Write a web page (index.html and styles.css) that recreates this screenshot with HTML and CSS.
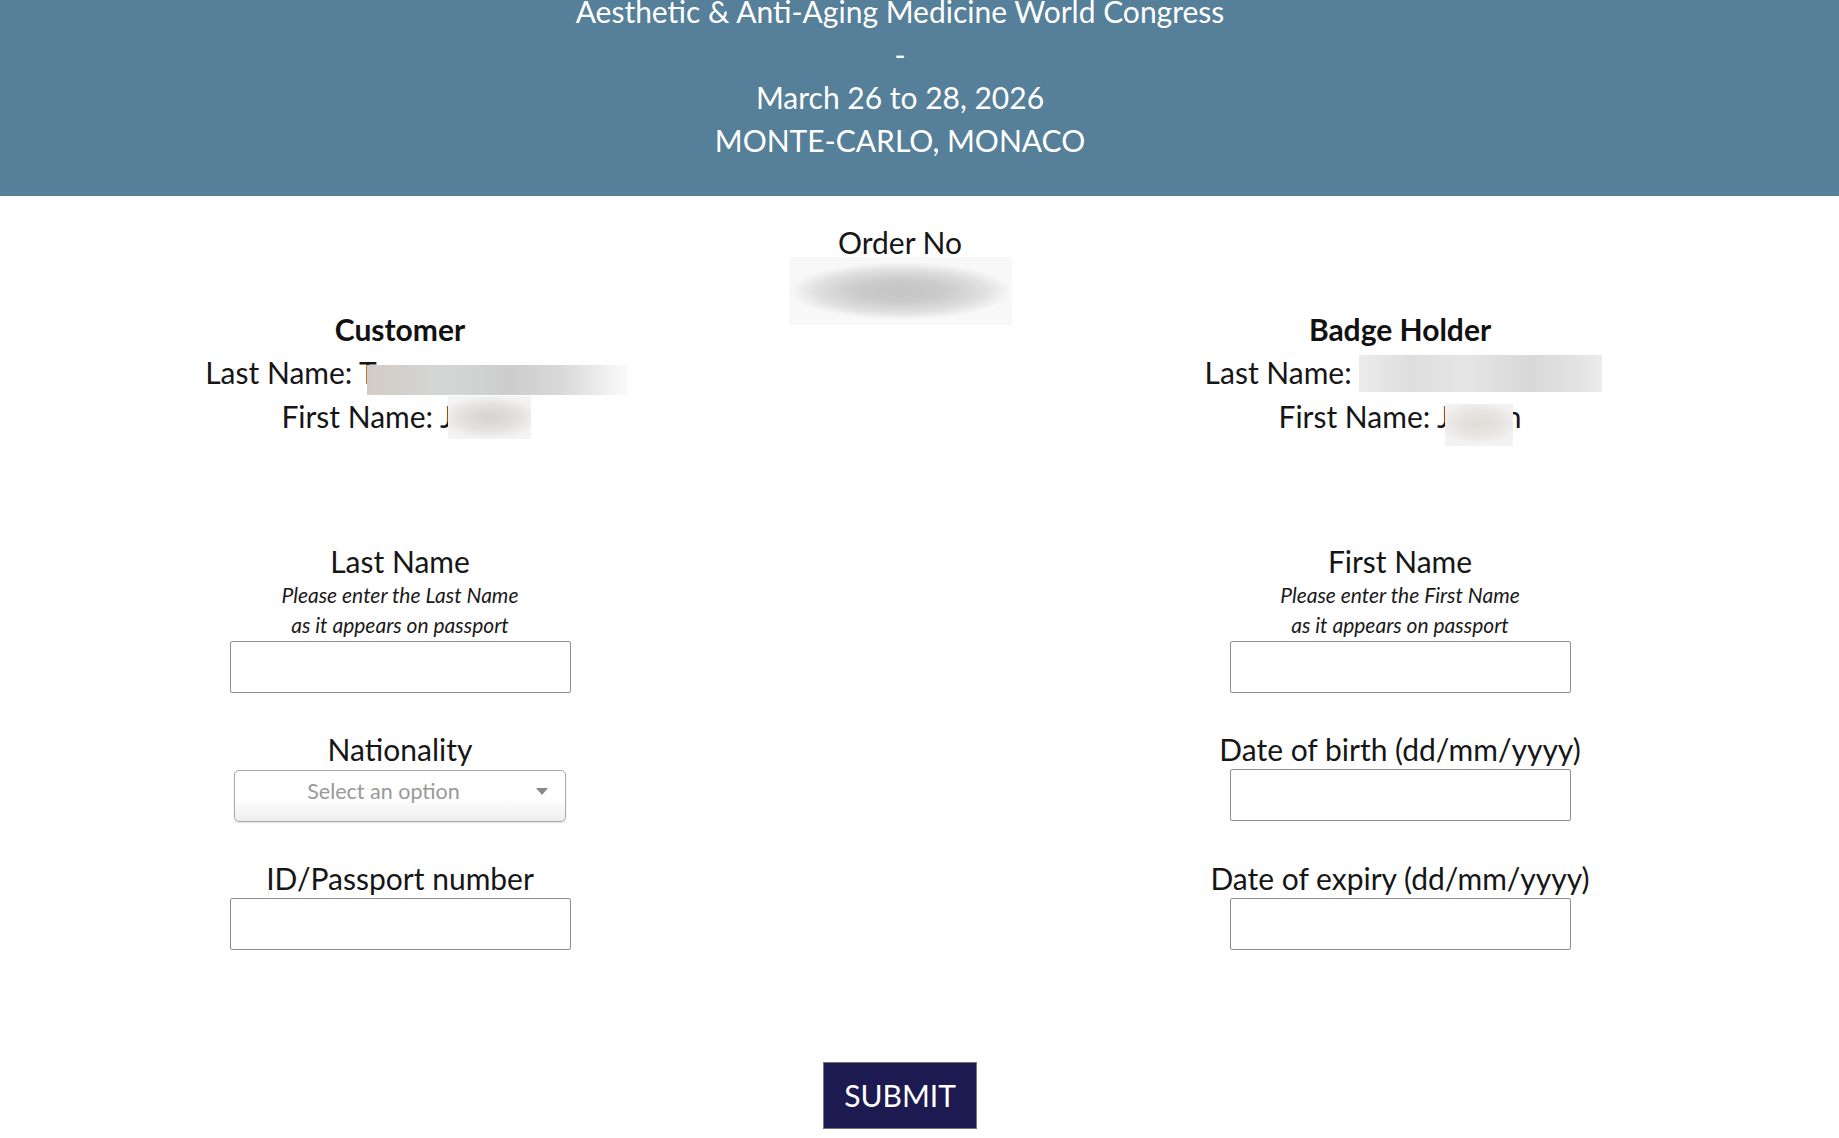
FILE: index.html
```html
<!DOCTYPE html>
<html lang="en">
<head>
<meta charset="utf-8">
<title>Passport details – Aesthetic &amp; Anti-Aging Medicine World Congress</title>
<link rel="stylesheet" href="styles.css">
</head>
<body>
<header class="banner">
  <div class="banner-inner">
    <p class="banner-line">Aesthetic &amp; Anti-Aging Medicine World Congress</p>
    <p class="banner-line">-</p>
    <p class="banner-line">March 26 to 28, 2026</p>
    <p class="banner-line">MONTE-CARLO, MONACO</p>
  </div>
</header>
<main class="page">
  <section class="order">
    <div class="order-label">Order No</div>
    <div class="redact redact-order"></div>
  </section>
  <section class="people">
    <div class="person">
      <h2 class="person-title">Customer</h2>
      <p class="person-row">Last Name: T<span class="redact redact-c-last"></span></p>
      <p class="person-row">First Name: J<span class="redact redact-c-first"></span></p>
    </div>
    <div class="person">
      <h2 class="person-title">Badge Holder</h2>
      <p class="person-row">Last Name: <span class="redact redact-b-last"></span></p>
      <p class="person-row">First Name: J<span class="redact redact-b-first"></span>n</p>
    </div>
  </section>
  <form class="passport-form">
    <div class="field">
      <label class="field-label" for="last-name">Last Name</label>
      <p class="field-hint">Please enter the Last Name<br>as it appears on passport</p>
      <input id="last-name" class="text-input" type="text">
    </div>
    <div class="field">
      <label class="field-label" for="first-name">First Name</label>
      <p class="field-hint">Please enter the First Name<br>as it appears on passport</p>
      <input id="first-name" class="text-input" type="text">
    </div>
    <div class="field">
      <label class="field-label">Nationality</label>
      <div class="select" role="combobox" aria-label="Nationality">
        <span class="select-text">Select an option</span>
        <span class="select-arrow"></span>
      </div>
    </div>
    <div class="field">
      <label class="field-label" for="dob">Date of birth (dd/mm/yyyy)</label>
      <input id="dob" class="text-input" type="text">
    </div>
    <div class="field">
      <label class="field-label" for="passport">ID/Passport number</label>
      <input id="passport" class="text-input" type="text">
    </div>
    <div class="field">
      <label class="field-label" for="expiry">Date of expiry (dd/mm/yyyy)</label>
      <input id="expiry" class="text-input" type="text">
    </div>
    <div class="form-actions">
      <button type="submit" class="submit">SUBMIT</button>
    </div>
  </form>
</main>
</body>
</html>
```

FILE: styles.css
```css
html, body {
  margin: 0;
  padding: 0;
}

body {
  font-family: Lato, "Open Sans", "Liberation Sans", sans-serif;
  color: #161616;
  background: #ffffff;
}

.banner {
  background: #567f99;
  color: #ffffff;
  padding-bottom: 34.5px;
}

.banner-inner {
  width: 1800px;
  margin-top: -10.5px;
  text-align: center;
  font-size: 30px;
  line-height: 43px;
}

.banner-line {
  margin: 0;
}

.page {
  width: 1800px;
  padding-top: 27.3px;
}

.order {
  text-align: center;
}

.order-label {
  font-size: 30px;
  line-height: 38px;
}

.redact {
  display: inline-block;
  position: relative;
  z-index: 1;
}

.redact-order {
  display: block;
  width: 223px;
  height: 68px;
  margin: -4.3px auto -17.5px;
  background: radial-gradient(ellipse 50% 42% at 50% 50%, #c4c4c4 0%, #cbcbcb 40%, #e0e0e0 75%, #f8f8f8 100%);
}

.people {
  display: grid;
  grid-template-columns: 800px 800px;
  column-gap: 200px;
  text-align: center;
}

.person-title {
  margin: 0;
  font-size: 30px;
  font-weight: 700;
  line-height: 42px;
  color: #111111;
}

.person-row {
  margin: 0;
  font-size: 30px;
  line-height: 44px;
}

.redact-c-last {
  width: 261px;
  height: 30px;
  vertical-align: -5px;
  margin: 0 -33px -6.5px -10px;
  background: linear-gradient(to right, #d2ccc6 0%, #d4d6d6 30%, #cdcdcd 55%, #d9d9d9 75%, #fbfbfb 100%);
}

.redact-c-first {
  width: 83px;
  height: 43px;
  vertical-align: -5px;
  margin: 0 -12px -6.5px -5px;
  background: radial-gradient(ellipse 60% 50% at 50% 50%, #d4d3cf 0%, #e3e2df 60%, #f3f3f3 100%);
}

.redact-b-last {
  width: 243px;
  height: 37px;
  vertical-align: -5px;
  margin: 0 -7px -3.5px 0;
  background: linear-gradient(to right, #ececec 0%, #dedede 20%, #e5e5e5 45%, #d8d8d8 70%, #e3e3e3 90%, #ececec 100%);
}

.redact-b-first {
  width: 68px;
  height: 42px;
  vertical-align: -5px;
  margin: 0 -8px -13.5px -5px;
  background: radial-gradient(ellipse 60% 50% at 50% 45%, #e0dbd7 0%, #e8e5e2 60%, #f2f2f2 100%);
}

.passport-form {
  display: grid;
  grid-template-columns: 800px 800px;
  column-gap: 200px;
  row-gap: 37px;
  margin-top: 104.5px;
}

.field {
  display: flex;
  flex-direction: column;
  align-items: center;
}

.field-label {
  font-size: 30px;
  line-height: 38px;
}

.field-hint {
  margin: 0;
  font-style: italic;
  font-size: 21px;
  line-height: 30px;
  text-align: center;
  color: #1a1a1a;
}

.text-input {
  box-sizing: border-box;
  width: 341px;
  height: 52px;
  margin: 1px 0 0;
  border: 1px solid #8f8f8f;
  border-radius: 2px;
  background: #ffffff;
  font: inherit;
}

.select {
  box-sizing: border-box;
  width: 332px;
  height: 52px;
  margin-top: 2px;
  display: flex;
  align-items: center;
  padding-bottom: 10px;
  border: 1px solid #aaaaaa;
  border-radius: 5px;
  background: linear-gradient(to top, #eeeeee 0%, #ffffff 50%);
  box-shadow: 0 1px 2px rgba(0, 0, 0, 0.12);
}

.select-text {
  flex: 1;
  text-align: center;
  color: #999999;
  font-size: 21.5px;
}

.select-arrow {
  width: 0;
  height: 0;
  margin: 0 17px 0 4px;
  border-left: 6px solid transparent;
  border-right: 6px solid transparent;
  border-top: 7px solid #888888;
}

.form-actions {
  grid-column: 1 / -1;
  justify-self: center;
  margin-top: 74.5px;
}

.submit {
  height: 67px;
  padding: 0 20.5px;
  background: #1c1a50;
  color: #ffffff;
  border: 1px solid #747474;
  font-family: Lato, "Open Sans", sans-serif;
  font-size: 30px;
}
```
